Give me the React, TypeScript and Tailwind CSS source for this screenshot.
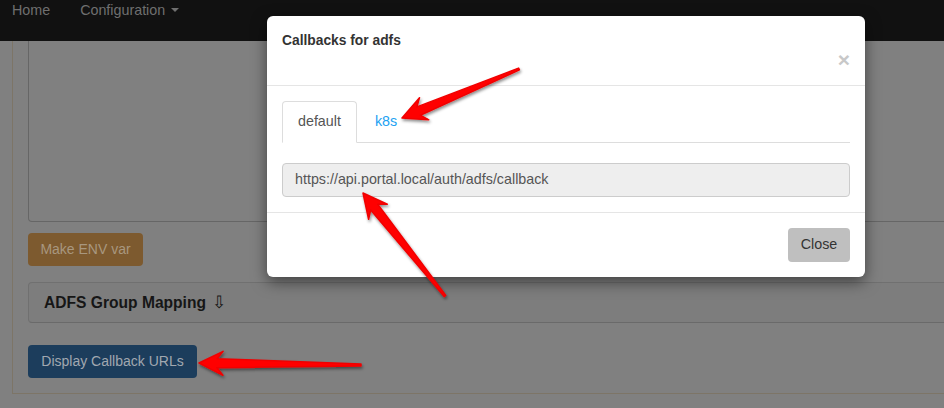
import React from "react";

type Pt = [number, number];

// tapered annotation arrow: thin tail, wide head at the tip
function arrowPoints(tail: Pt, tip: Pt, head = 24, barb = 12, neck = 4.5) {
  const dx = tail[0] - tip[0];
  const dy = tail[1] - tip[1];
  const len = Math.hypot(dx, dy);
  const ux = dx / len;
  const uy = dy / len;
  const nx = -uy;
  const ny = ux;
  const at = (d: number, w: number): string =>
    `${(tip[0] + ux * d + nx * w).toFixed(1)},${(tip[1] + uy * d + ny * w).toFixed(1)}`;
  return [
    at(0, 0),
    at(head, barb),
    at(head - 6, neck),
    at(len, 1),
    at(len, -1),
    at(head - 6, -neck),
    at(head, -barb),
  ].join(" ");
}

const arrows: { tail: Pt; tip: Pt }[] = [
  { tail: [519, 69], tip: [402, 118] },
  { tail: [445, 296], tip: [363, 193] },
  { tail: [361, 365], tip: [199, 363] },
];

export default function App() {
  return (
    <div
      className="relative w-[944px] h-[408px] overflow-hidden bg-[#808080] text-[14px]"
      style={{ fontFamily: '"Liberation Sans", Arial, sans-serif' }}
    >
      {/* Navbar (dimmed by backdrop) */}
      <nav className="h-[41px] bg-[#111] flex items-start gap-[30px] pl-3 leading-[20px] text-[#6f6f6f] text-[14.3px]">
        <span>Home</span>
        <span className="flex items-center gap-[6px]">
          Configuration
          <span className="inline-block w-0 h-0 border-x-[4px] border-x-transparent border-t-[4px] border-t-[#6f6f6f]" />
        </span>
      </nav>

      {/* Page content behind the modal */}
      <div className="pl-3">
        <div className="w-[1000px] border-l border-b border-[#7d7567] pl-[15px] pb-[15px]">
          <div className="h-[181px] border-x border-b border-[#666] rounded-b-[4px]" />
          <div className="mt-[11px] w-[115px] h-[33px] rounded-[4px] bg-[#7d5a2f] text-[#a8977f] flex items-center justify-center">
            Make ENV var
          </div>
          <div className="mt-[16px] h-[41px] border border-[#707070] border-b-[#6a6a6a] rounded-[4px] bg-[#7d7d7d] pl-[15px] flex items-center gap-[6px] text-[15.6px] font-bold text-[#161616]">
            <span>ADFS Group Mapping</span>
            <span className="font-normal text-[16.5px]">⇩</span>
          </div>
          <div className="mt-[22px] w-[169px] h-[33px] rounded-[4px] bg-[#1c3d5c] text-[#a1a8b0] flex items-center justify-center">
            Display Callback URLs
          </div>
        </div>
      </div>

      {/* Modal */}
      <div className="absolute left-[267px] top-[16px] w-[598px] bg-white rounded-[6px] shadow-[0_5px_15px_rgba(0,0,0,0.5)] text-[14.3px]">
        <div className="p-[15px] border-b border-[#e5e5e5]">
          <div className="leading-[20px] font-bold text-[13.8px] text-[#333]">Callbacks for adfs</div>
          <div className="flex justify-end leading-[20px] h-[20px] -mt-[1px]">
            <span className="text-[21px] font-bold text-[#c8c8c8] leading-[20px]">×</span>
          </div>
        </div>
        <div className="p-[15px]">
          <div className="flex border-b border-[#ddd] h-[42px]">
            <div className="h-[42px] px-[15px] flex items-center bg-white border border-[#ddd] border-b-white rounded-t-[4px] text-[#555]">
              default
            </div>
            <div className="ml-[3px] px-[15px] flex items-center text-[#22a2f2]">k8s</div>
          </div>
          <div className="mt-[20px] h-[34px] border border-[#ccc] bg-[#eee] rounded-[4px] px-[12px] flex items-center text-[#555]">
            https://api.portal.local/auth/adfs/callback
          </div>
        </div>
        <div className="p-[15px] border-t border-[#e5e5e5] flex justify-end">
          <div className="h-[34px] w-[62px] rounded-[4px] bg-[#bfbfbf] text-[#333] flex items-center justify-center">Close</div>
        </div>
      </div>

      {/* Annotation arrows */}
      <svg className="absolute inset-0 pointer-events-none" width="944" height="408">
        <defs>
          <filter id="sh" x="-20%" y="-20%" width="140%" height="140%">
            <feDropShadow dx="1" dy="2" stdDeviation="1.5" floodColor="#000" floodOpacity="0.45" />
          </filter>
        </defs>
        {arrows.map((a, i) => (
          <polygon
            key={i}
            points={arrowPoints(a.tail, a.tip)}
            fill="#ff0000"
            stroke="#f00000"
            strokeWidth="1.5"
            strokeLinejoin="round"
            filter="url(#sh)"
          />
        ))}
      </svg>
    </div>
  );
}
